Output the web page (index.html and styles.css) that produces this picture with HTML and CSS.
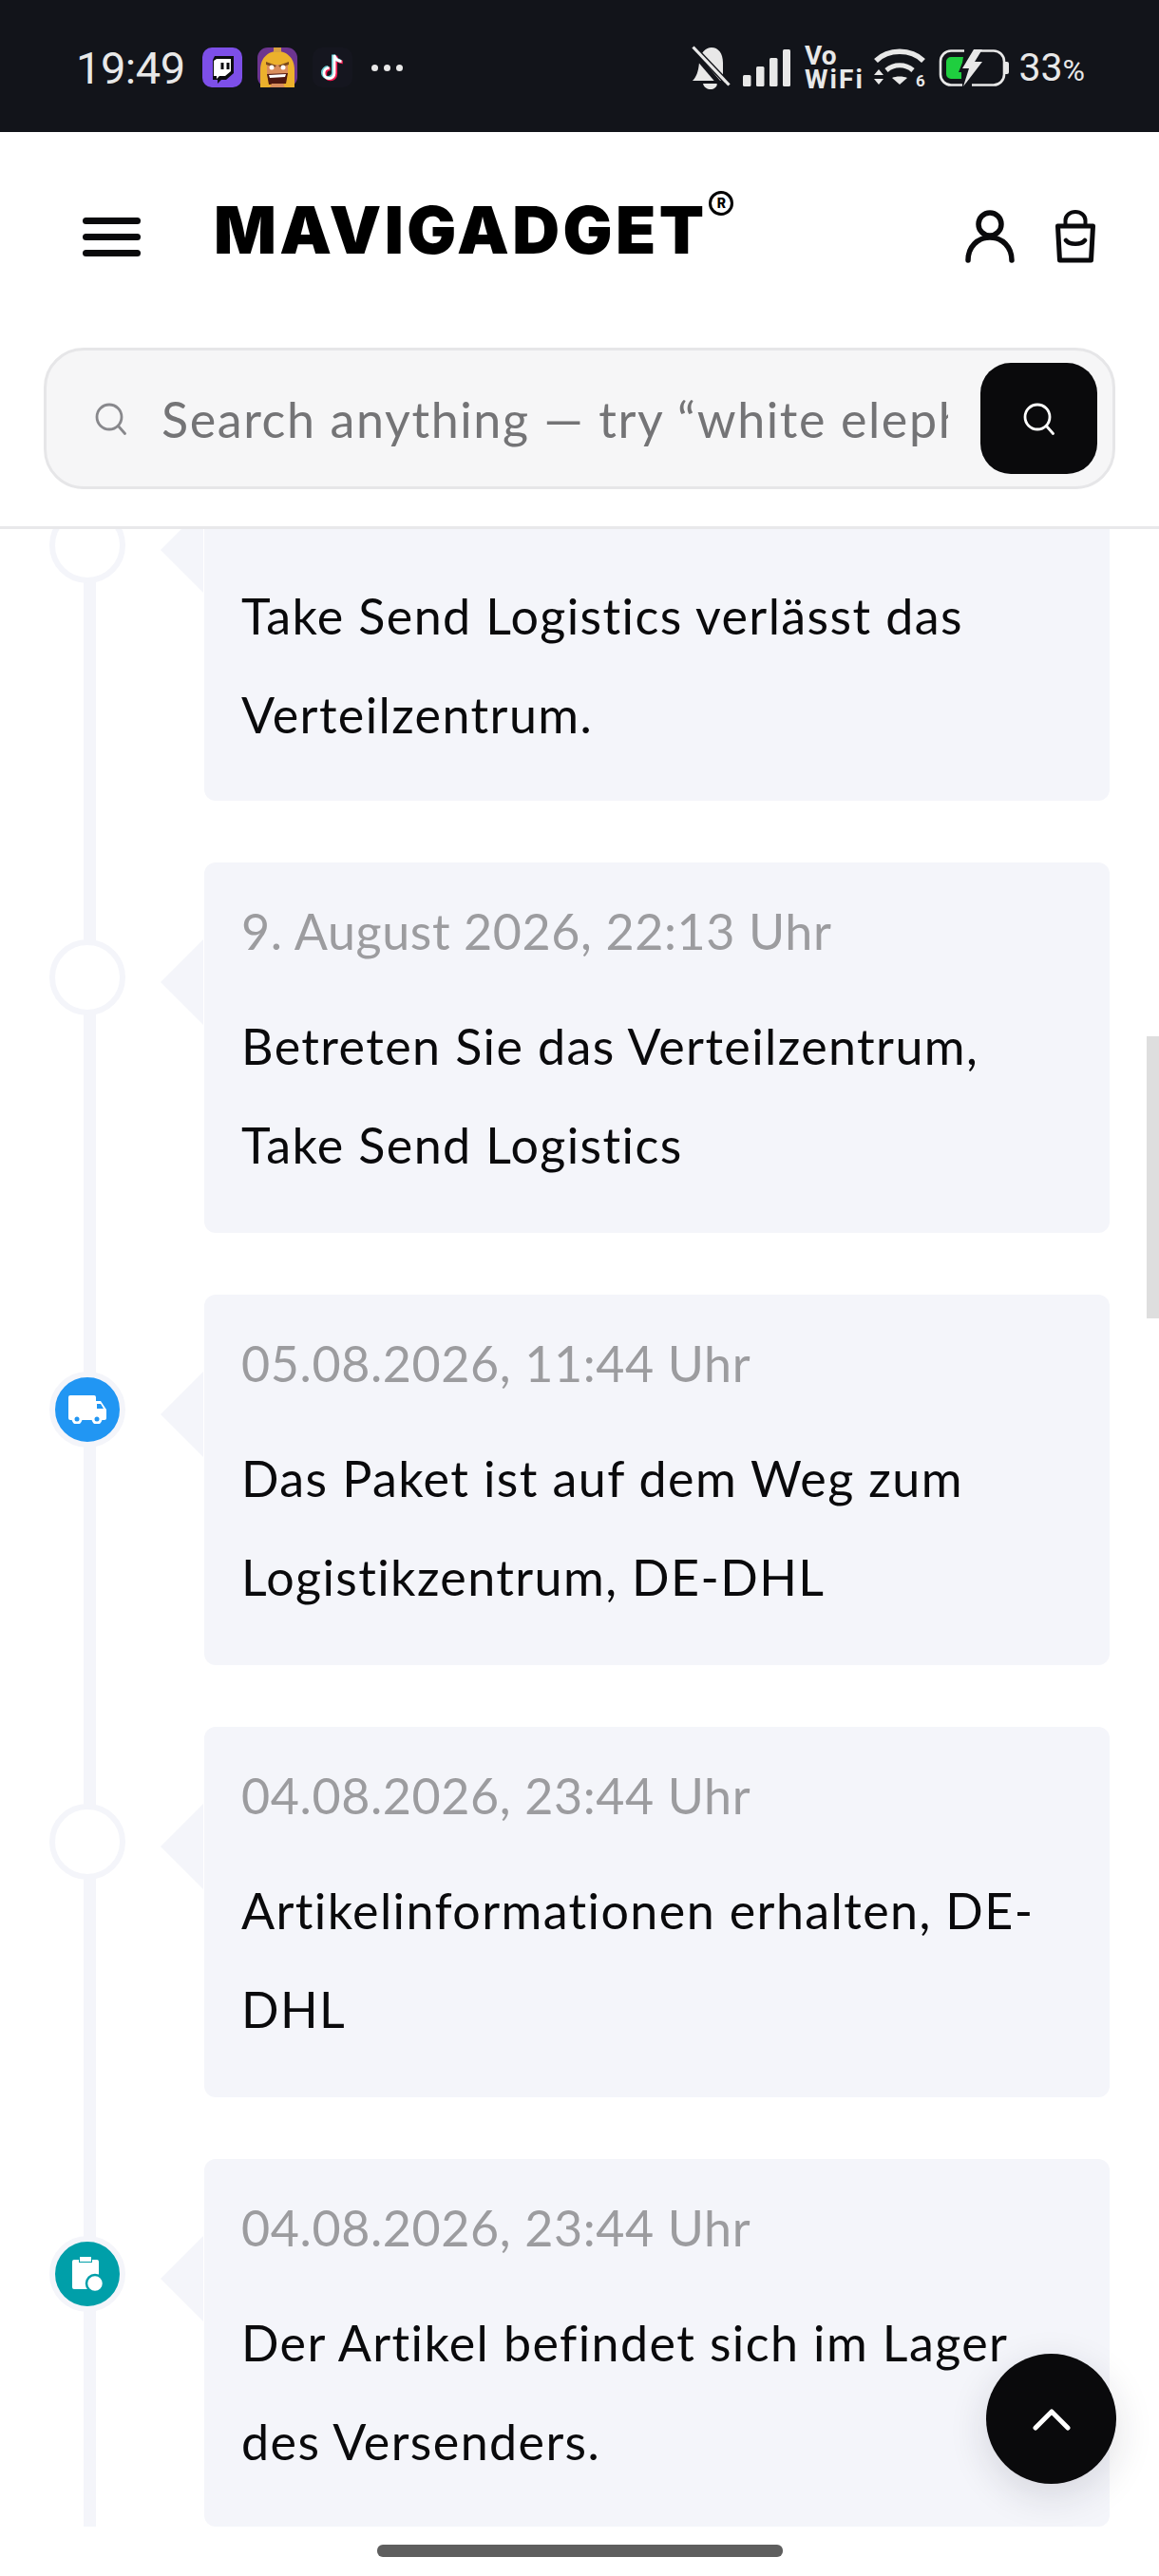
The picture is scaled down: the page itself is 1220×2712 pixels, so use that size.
FILE: index.html
```html
<!DOCTYPE html>
<html lang="en">

<head>
  <meta charset="UTF-8">
  <meta name="viewport" content="width=device-width, initial-scale=1.0">
  <title>Mavigadget Tracking</title>
  <link rel="stylesheet" href="styles.css">
</head>

<body>
  <!-- Status bar -->
  <div class="status-bar">
    <div class="status-left">
      <span class="clock">19:49</span>
      <div class="app-icons">
        <svg class="app-icon" viewBox="0 0 42 42"><rect width="42" height="42" rx="10" fill="#7d4fe8"/><path d="M13 9h20v18l-8 7h-5l-4 4v-4h-5V13z" fill="#0c0c10"/><path d="M15 12h15v13l-6 5h-6l-3 3v-3h-3V14z" fill="#fff"/><path d="M21 16v7M27 16v7" stroke="#0c0c10" stroke-width="3"/></svg>
        <svg class="app-icon" viewBox="0 0 42 42"><rect width="42" height="42" rx="11" fill="#6d3590"/><circle cx="8" cy="12" r="1" fill="#d9a"/><circle cx="36" cy="30" r="1" fill="#d9a"/><path d="M3 42V24C3 9 13 4 21 4s18 5 18 20v18z" fill="#ecb12c"/><rect x="17" y="0" width="8" height="5" fill="#d8a040"/><path d="M10 18l22 0v10H10z" fill="#d98d5c"/><path d="M9 15l11 4-2 2-9-3zM33 15l-11 4 2 2 9-3z" fill="#7c4a1c"/><circle cx="15" cy="21" r="2.500" fill="#fff"/><circle cx="27" cy="21" r="2.500" fill="#fff"/><path d="M10 28l22-1-2 11-18 1z" fill="#4e1710"/><path d="M12 29l18-1-1 3-16 1z" fill="#fff"/><path d="M13 42l2-4h12l2 4z" fill="#d98d5c"/></svg>
        <svg class="app-icon" viewBox="0 0 42 42"><rect width="42" height="42" rx="10" fill="#15161f"/><path d="M23 8v19a5.500 5.500 0 1 1-5.500-5.500M23 8c1 4 4 6.500 7.500 6.500" fill="none" stroke="#ee1d52" stroke-width="3.600" transform="translate(1.300 1)"/><path d="M23 8v19a5.500 5.500 0 1 1-5.500-5.500M23 8c1 4 4 6.500 7.500 6.500" fill="none" stroke="#69c9d0" stroke-width="3.600" transform="translate(-1.200 -.6)"/><path d="M23 8v19a5.500 5.500 0 1 1-5.500-5.500M23 8c1 4 4 6.500 7.500 6.500" fill="none" stroke="#fff" stroke-width="2.800"/></svg>
      </div>
      <span class="dots"><i></i><i></i><i></i></span>
    </div>
    <div class="status-right">
      <svg class="st-bell" viewBox="0 0 41 46"><path d="M1 37C5 33 7 28 8 18 9 7 15 2 21 2 28 2 33 8 33 18v19z" fill="#e8e8e8"/><path d="M12 40h15c-1 8-13 8-15 0z" fill="#e8e8e8"/><path d="M-2 3l34 40" stroke="#12141a" stroke-width="5"/><path d="M1 1l39 41" stroke="#12141a" stroke-width="6"/><path d="M1.500 1.500l38 40" stroke="#e8e8e8" stroke-width="3.200"/></svg>
      <svg class="st-signal" viewBox="0 0 50 39"><rect x="0" y="27" width="8.500" height="12" rx="1.500"/><rect x="14" y="18" width="8.500" height="21" rx="1.500"/><rect x="28" y="9" width="8.500" height="30" rx="1.500"/><rect x="42" y="0" width="8" height="39" rx="1.500"/></svg>
      <svg class="st-vowifi" viewBox="0 0 61 46"><text x="0" y="20" class="vo-text">Vo</text><text x="0" y="45" class="vo-text" textLength="61">WiFi</text></svg>
      <svg class="st-wifi" viewBox="0 0 54 40"><path d="M2 13C15 0 39 0 52 13" fill="none" stroke="#e8e8e8" stroke-width="5.500"/><path d="M13 23c8-7 20-7 28 0" fill="none" stroke="#e8e8e8" stroke-width="5"/><path d="M19 31c4-2 12-2 16 0l-8 7z" fill="#e8e8e8"/><path d="M0 28l5-6 5 6zM0 32l5 6 5-6z" fill="#e8e8e8"/><text x="44" y="40" class="st-six">6</text></svg>
      <svg class="st-battery" viewBox="0 0 74 39"><path d="M27 1.500H13A11 11 0 0 0 2 12.500v14a11 11 0 0 0 11 11h12M37 1.500h21a11 11 0 0 1 11 11v14a11 11 0 0 1-11 11H35" fill="none" stroke="#e8e8e8" stroke-width="2.600"/><path d="M70 13h2a2 2 0 0 1 2 2v9a2 2 0 0 1-2 2h-2z" fill="#e8e8e8"/><path d="M13 8h13l-1 6-4 10h3v7H13a5 5 0 0 1-5-5V13a5 5 0 0 1 5-5z" fill="#1fce3f"/><path d="M37 0L25 20h7l-6 19 20-26h-8l8-13z" fill="#e8e8e8"/></svg>
      <span class="st-percent">33<small>%</small></span>
    </div>
  </div>

  <!-- Site header -->
  <header class="site-header">
    <div class="logo-row">
      <div class="hamburger"><span></span><span></span><span></span></div>
      <div class="logo">MAVIGADGET<span class="reg">R</span></div>
      <div class="header-icons">
        <svg class="icon-user" viewBox="0 0 52 56"><circle cx="26" cy="15" r="12" fill="none" stroke="#0a0a0c" stroke-width="5.500"/><path d="M3 53c0-14 10-24 23-24s23 10 23 24" fill="none" stroke="#0a0a0c" stroke-width="5.500" stroke-linecap="round"/></svg>
        <svg class="icon-bag" viewBox="0 0 42 56"><path d="M2.500 17h37l-2 36h-33z" fill="none" stroke="#0a0a0c" stroke-width="5" stroke-linejoin="round"/><path d="M10.500 17v-6a10.500 9 0 0 1 21 0v6" fill="none" stroke="#0a0a0c" stroke-width="4"/><path d="M11 32c4 5 16 5 20 0" fill="none" stroke="#0a0a0c" stroke-width="4.500" stroke-linecap="round"/></svg>
      </div>
    </div>
    <div class="search-box">
      <svg class="search-icon" viewBox="0 0 34 34"><circle cx="15" cy="15" r="13" fill="none" stroke="#88888c" stroke-width="2.800"/><path d="M24.500 24.500l7 8" stroke="#88888c" stroke-width="2.800" stroke-linecap="round"/></svg>
      <div class="search-text">Search anything — try “white elephant gift”</div>
      <button class="search-btn"><svg viewBox="0 0 34 34"><circle cx="15" cy="15" r="13" fill="none" stroke="#fff" stroke-width="2.800"/><path d="M24.500 24.500l7 8" stroke="#fff" stroke-width="2.800" stroke-linecap="round"/></svg></button>
    </div>
  </header>

  <!-- Tracking timeline -->
  <main class="timeline">
    <div class="tl-item first">
      <div class="tl-dot"></div>
      <div class="tl-card">
        <p class="tl-msg">Take Send Logistics verlässt das Verteilzentrum.</p>
      </div>
    </div>
    <div class="tl-item">
      <div class="tl-dot"></div>
      <div class="tl-card">
        <div class="tl-date">9. August 2026, 22:13 Uhr</div>
        <p class="tl-msg">Betreten Sie das Verteilzentrum, Take Send Logistics</p>
      </div>
    </div>
    <div class="tl-item">
      <div class="tl-dot blue">
        <svg viewBox="0 0 42 30"><path d="M3 0h25a2 2 0 0 1 2 2v4h5l6 9v9a2 2 0 0 1-2 2H3a2 2 0 0 1-2-2V2a2 2 0 0 1 2-2z" fill="#fff"/><path d="M31 9h4l3 5h-7z" fill="#2196f3"/><circle cx="10" cy="25" r="5.500" fill="#fff"/><circle cx="10" cy="25" r="2.500" fill="#2196f3"/><circle cx="31" cy="25" r="5.500" fill="#fff"/><circle cx="31" cy="25" r="2.500" fill="#2196f3"/></svg>
      </div>
      <div class="tl-card">
        <div class="tl-date">05.08.2026, 11:44 Uhr</div>
        <p class="tl-msg">Das Paket ist auf dem Weg zum Logistikzentrum, DE-DHL</p>
      </div>
    </div>
    <div class="tl-item">
      <div class="tl-dot"></div>
      <div class="tl-card">
        <div class="tl-date">04.08.2026, 23:44 Uhr</div>
        <p class="tl-msg">Artikelinformationen erhalten, DE-DHL</p>
      </div>
    </div>
    <div class="tl-item">
      <div class="tl-dot teal">
        <svg viewBox="0 0 34 36"><path d="M3 3h5v3h14V3h5a2 2 0 0 1 2 2v27a2 2 0 0 1-2 2H3a2 2 0 0 1-2-2V5a2 2 0 0 1 2-2z" fill="#fff"/><rect x="9" y="0" width="12" height="5" fill="#fff"/><circle cx="25" cy="28" r="9" fill="#fff" stroke="#009fa9" stroke-width="2.500"/></svg>
      </div>
      <div class="tl-card">
        <div class="tl-date">04.08.2026, 23:44 Uhr</div>
        <p class="tl-msg">Der Artikel befindet sich im Lager des Versenders.</p>
      </div>
    </div>
  </main>

  <!-- Overlays -->
  <div class="page-scroll"></div>
  <button class="to-top"><svg viewBox="0 0 40 24"><path d="M3 21L20 4l17 17" fill="none" stroke="#fff" stroke-width="5" stroke-linecap="round" stroke-linejoin="round"/></svg></button>
  <div class="nav-area"><div class="home-bar"></div></div>
</body>

</html>
```

FILE: styles.css
```css
:root {
  --ink: #0a0a0c;
  --card: #f4f5fa;
  --muted: #9c9c9f;
}

* {
  box-sizing: border-box;
}

html,
body {
  height: 2712px;
}

body {
  margin: 0;
  background: #fff;
  color: var(--ink);
  font-family: 'Lato', 'Noto Sans', sans-serif;
  font-variant-ligatures: none;
  overflow: hidden;
  position: relative;
}

/* Status bar */
.status-bar {
  height: 139px;
  background: #12141a;
  display: flex;
  justify-content: space-between;
  align-items: center;
  padding: 3px 78px 0 80px;
  color: #e8e8e8;
  font-family: 'Roboto', sans-serif;
}

.status-left,
.status-right {
  display: flex;
  align-items: center;
}

.clock {
  font-size: 47px;
  letter-spacing: -0.5px;
  margin-right: 18px;
}

.app-icons {
  display: flex;
  gap: 16px;
  margin-right: 20px;
}

.app-icon {
  display: block;
  width: 42px;
  height: 42px;
}

.dots {
  display: flex;
  gap: 6px;
}

.dots i {
  width: 7px;
  height: 7px;
  border-radius: 50%;
  background: #e8e8e8;
}

.st-bell {
  width: 41px;
  height: 46px;
  margin-right: 13px;
}

.st-signal {
  width: 50px;
  height: 39px;
  fill: #e8e8e8;
  margin-right: 15px;
}

.st-vowifi {
  width: 61px;
  height: 46px;
  margin-right: 12px;
  overflow: visible;
}

.vo-text {
  font-family: 'Roboto', sans-serif;
  font-size: 28px;
  font-weight: 700;
  fill: #e8e8e8;
}

.st-wifi {
  width: 54px;
  height: 40px;
  margin-right: 14px;
  overflow: visible;
}

.st-six {
  font-family: 'Roboto', sans-serif;
  font-size: 17px;
  font-weight: 700;
  fill: #e8e8e8;
}

.st-battery {
  width: 74px;
  height: 39px;
  margin-right: 10px;
}

.st-percent {
  font-size: 41px;
}

.st-percent small {
  font-size: 32px;
}

/* Site header */
.site-header {
  height: 418px;
  background: #fff;
  border-bottom: 3px solid #e8e8ea;
  position: relative;
  z-index: 2;
}

.logo-row {
  height: 220px;
  display: flex;
  align-items: center;
  padding: 0 67px 0 87px;
}

.hamburger {
  width: 61px;
  display: flex;
  flex-direction: column;
  gap: 10px;
  margin-right: 77px;
}

.hamburger span {
  height: 7px;
  background: var(--ink);
  border-radius: 4px;
}

.logo {
  display: flex;
  font-family: 'Inter', sans-serif;
  font-weight: 900;
  font-size: 69px;
  line-height: 70px;
  letter-spacing: 3.4px;
  color: #000;
  margin-top: -14px;
  white-space: nowrap;
}

/* registered mark as a ring around a small letter */
.reg {
  flex: none;
  width: 26px;
  height: 26px;
  margin: -6px 0 0 2px;
  border: 3px solid #000;
  border-radius: 50%;
  font-size: 14px;
  font-weight: 800;
  line-height: 20px;
  letter-spacing: 0;
  text-align: center;
}

.header-icons {
  margin-left: auto;
  display: flex;
  align-items: center;
  gap: 43px;
}

.icon-user {
  width: 52px;
  height: 56px;
}

.icon-bag {
  width: 42px;
  height: 56px;
}

.search-box {
  margin: 7px 46px 0;
  height: 149px;
  background: #f6f6f7;
  border: 3px solid #e6e6e8;
  border-radius: 42px;
  display: flex;
  align-items: center;
  padding: 0 16px 0 51px;
}

.search-icon {
  width: 34px;
  height: 34px;
  flex: none;
}

.search-text {
  flex: 1;
  min-width: 0;
  margin: 0 34px 0 36px;
  overflow: hidden;
  white-space: nowrap;
  font-size: 52px;
  letter-spacing: 1.6px;
  color: #747476;
}

.search-btn {
  flex: none;
  width: 123px;
  height: 117px;
  border: 0;
  border-radius: 32px;
  background: var(--ink);
  display: flex;
  align-items: center;
  justify-content: center;
  padding: 0;
}

.search-btn svg {
  width: 34px;
  height: 34px;
}

/* Timeline */
.timeline {
  padding: 0 52px 0 92px;
  margin-top: -104px;
  position: relative;
  z-index: 1;
  height: 2207px;
  overflow: hidden;
}

.timeline::before {
  content: '';
  position: absolute;
  left: 88px;
  top: 0;
  bottom: 0;
  width: 13px;
  background: var(--card);
}

.tl-item {
  position: relative;
  margin-bottom: 65px;
  padding-left: 123px;
}

.tl-card {
  position: relative;
  background: var(--card);
  border-radius: 12px;
  padding: 37px 60px 0 39px;
  height: 390px;
}

.tl-item:last-child .tl-card {
  height: 387px;
}

.tl-card::before {
  content: '';
  position: absolute;
  left: -46px;
  top: 81px;
  width: 0;
  height: 0;
  border-style: solid;
  border-width: 45px 45px 45px 0;
  border-color: transparent var(--card) transparent transparent;
}

.first .tl-card {
  padding-top: 143px;
}

.tl-date {
  font-size: 52px;
  line-height: 70px;
  letter-spacing: 0.6px;
  color: var(--muted);
  margin-bottom: 34px;
}

.tl-msg {
  margin: 0;
  font-size: 52px;
  line-height: 104px;
  letter-spacing: 1.4px;
}

.tl-dot {
  position: absolute;
  left: -40px;
  top: 81px;
  width: 80px;
  height: 80px;
  border-radius: 50%;
  background: #fff;
  border: 6px solid var(--card);
  display: flex;
  align-items: center;
  justify-content: center;
  z-index: 1;
}

.tl-dot.blue {
  background: #2196f3;
}

.tl-dot.teal {
  background: #009fa9;
}

.tl-dot.blue svg {
  width: 42px;
  height: 30px;
}

.tl-dot.teal svg {
  width: 34px;
  height: 36px;
}

/* Overlays */
.page-scroll {
  position: absolute;
  right: 0;
  top: 1091px;
  width: 13px;
  height: 297px;
  background: #dedede;
  z-index: 3;
}

.to-top {
  position: absolute;
  left: 1038px;
  top: 2478px;
  width: 137px;
  height: 137px;
  border: 0;
  border-radius: 50%;
  background: var(--ink);
  box-shadow: 0 12px 40px rgba(30, 30, 50, 0.14);
  display: flex;
  align-items: center;
  justify-content: center;
  padding: 0;
  z-index: 3;
}

.to-top svg {
  width: 40px;
  height: 24px;
}

.nav-area {
  position: absolute;
  left: 0;
  right: 0;
  bottom: 0;
  height: 52px;
  background: #fff;
  z-index: 3;
  display: flex;
  justify-content: center;
  padding-top: 19px;
}

.home-bar {
  width: 427px;
  height: 13px;
  border-radius: 6px;
  background: #5e5e5e;
}
```
